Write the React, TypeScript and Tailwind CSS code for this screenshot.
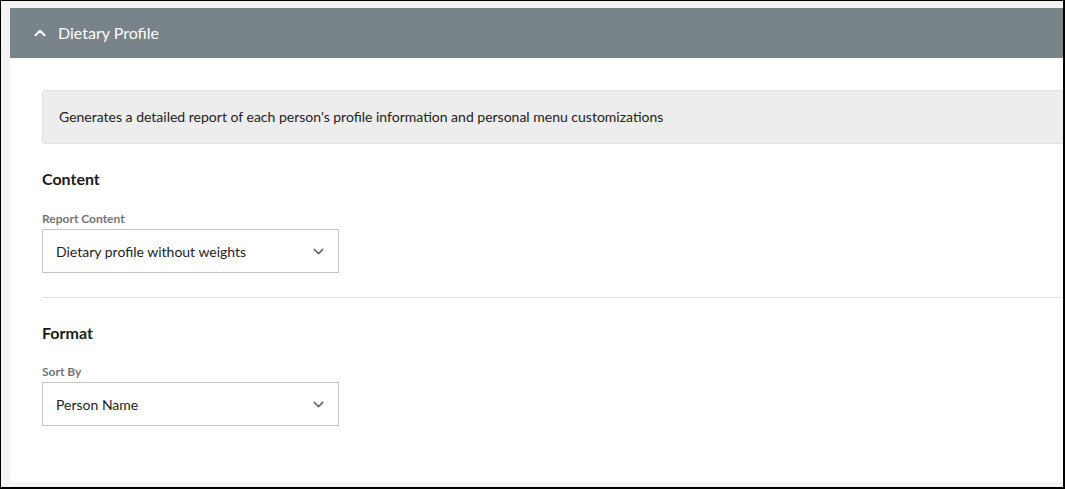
import { ChevronDown, ChevronUp } from 'lucide-react';

function SelectBox({ label, value }: { label: string; value: string }) {
  return (
    <div className="flex flex-col">
      <span className="text-[12px] font-bold text-[#737373] leading-[16px] mb-[2px]">{label}</span>
      <div className="w-[297px] h-[44px] border border-[#c6c6c6] bg-white flex items-center justify-between pl-[13px] pr-[11px]">
        <span className="text-[14px] text-[#1e1e1e]">{value}</span>
        <ChevronDown className="w-[17px] h-[17px] text-[#6b6b6b]" strokeWidth={2.2} />
      </div>
    </div>
  );
}

export default function App() {
  return (
    <div
      className="w-[1065px] h-[489px] overflow-hidden bg-[#f3f3f3] border-t border-l border-r-2 border-b-2 border-black"
      style={{ fontFamily: 'Lato, "Open Sans", sans-serif' }}
    >
      <div className="ml-[9px] mt-[7px] w-[1120px] h-[474px] bg-white rounded-b-[6px] flex flex-col">
        <div className="h-[50px] bg-[#78838a] flex items-center pl-[21px] gap-[9px] text-white">
          <ChevronUp className="w-[18px] h-[18px]" strokeWidth={2.8} />
          <span className="text-[16px]">Dietary Profile</span>
        </div>
        <div className="px-[32px] pt-[32px] flex flex-col">
          <div className="h-[54px] bg-[#ededed] border border-[#e0e0e0] rounded-[4px] flex items-center pl-[16px] pb-[1px] text-[14px] text-[#222]">
            Generates a detailed report of each person's profile information and personal menu customizations
          </div>
          <h2 className="mt-[24px] text-[16px] font-bold text-[#1b1b1b] leading-[22px]">Content</h2>
          <div className="mt-[21px]">
            <SelectBox label="Report Content" value="Dietary profile without weights" />
          </div>
          <div className="mt-[24px] border-t border-[#e2e2e2]" />
          <h2 className="mt-[24px] text-[16px] font-bold text-[#1b1b1b] leading-[22px]">Format</h2>
          <div className="mt-[20px]">
            <SelectBox label="Sort By" value="Person Name" />
          </div>
        </div>
      </div>
    </div>
  );
}
